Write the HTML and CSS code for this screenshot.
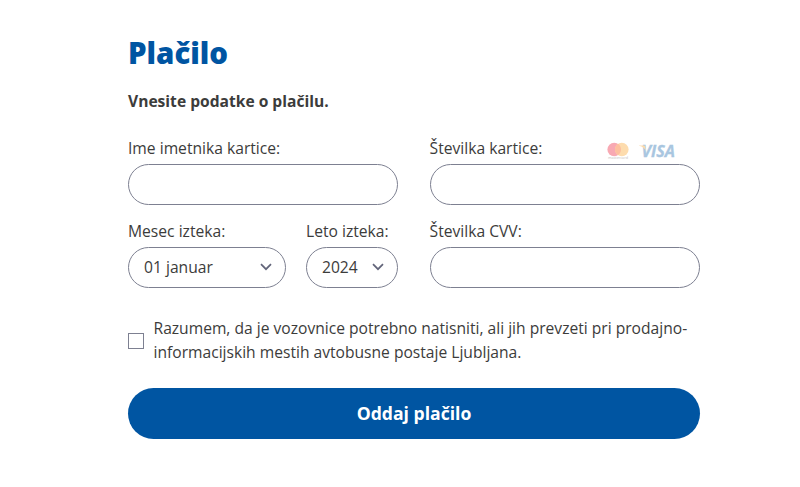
FILE: index.html
```html
<!DOCTYPE html>
<html lang="sl">
<head>
<meta charset="utf-8">
<title>Plačilo</title>
<link rel="stylesheet" href="styles.css">
</head>
<body>
<form class="payment">
  <h1 class="title">Plačilo</h1>
  <p class="intro">Vnesite podatke o plačilu.</p>
  <div class="fields">
    <div class="field">
      <label class="label" for="name">Ime imetnika kartice:</label>
      <input class="control" id="name" type="text">
    </div>
    <div class="field">
      <div class="label-row">
        <label class="label" for="number">Številka kartice:</label>
        <div class="brands">
          <svg class="mastercard" viewBox="0 0 22 18" aria-label="mastercard">
            <circle cx="7.2" cy="7.5" r="6.8" fill="#f8a9b3"/>
            <circle cx="14.8" cy="7.5" r="6.8" fill="#fddcae"/>
            <path d="M11 1.86a6.8 6.8 0 0 1 0 11.28a6.8 6.8 0 0 1 0-11.28z" fill="#fdbf9f"/>
            <text x="1" y="17" textLength="20" lengthAdjust="spacingAndGlyphs" class="mc-name">mastercard</text>
          </svg>
          <svg class="visa" viewBox="0 0 38 20" aria-label="Visa">
            <text x="2.500" y="15" textLength="33.500" lengthAdjust="spacingAndGlyphs" class="visa-name">VISA</text>
            <path d="M0 3.500h4.600c1 0 1.400.4 1.600 1.300l.9 4.400c-1-2.600-3.600-4.600-7.100-5.400z" fill="#fbdcae"/>
          </svg>
        </div>
      </div>
      <input class="control" id="number" type="text">
    </div>
    <div class="expiry">
      <div class="field">
        <span class="label">Mesec izteka:</span>
        <div class="control select"><span class="value">01 januar</span><svg class="chevron" viewBox="0 0 12 8"><path d="M1 1.2l5 5 5-5"/></svg></div>
      </div>
      <div class="field">
        <span class="label">Leto izteka:</span>
        <div class="control select"><span class="value">2024</span><svg class="chevron" viewBox="0 0 12 8"><path d="M1 1.2l5 5 5-5"/></svg></div>
      </div>
    </div>
    <div class="field">
      <label class="label" for="cvv">Številka CVV:</label>
      <input class="control" id="cvv" type="text">
    </div>
  </div>
  <label class="consent">
    <input class="checkbox" type="checkbox">
    <span class="consent-text">Razumem, da je vozovnice potrebno natisniti, ali jih prevzeti pri prodajno-<br>informacijskih mestih avtobusne postaje Ljubljana.</span>
  </label>
  <button class="submit" type="button">Oddaj plačilo</button>
</form>
</body>
</html>
```
FILE: styles.css
```css
* { box-sizing: border-box; }
body {
  margin: 0;
  background: #fff;
  color: #3c3c3b;
  font: 15.65px/24px "Open Sans", sans-serif;
}
.payment { width: 572px; margin-left: 128px; padding-top: 32px; }
.title {
  margin: 0;
  color: #0055a2;
  font-size: 29.4px;
  line-height: 43px;
  font-weight: 800;
}
.intro { margin: 14px 0 0; font-size: 15.6px; font-weight: 700; line-height: 24px; }
.fields {
  display: grid;
  grid-template-columns: 270.4px 270.4px;
  column-gap: 31.2px;
  row-gap: 14px;
  margin-top: 23px;
}
.field { display: flex; flex-direction: column; }
.label { display: block; height: 28px; line-height: 25px; white-space: nowrap; }
.label-row { display: flex; justify-content: space-between; padding-right: 22.500px; }
.brands { display: flex; align-items: flex-start; gap: 10.500px; padding-top: 6px; }
.mastercard { width: 22px; height: 18px; }
.mc-name { font: 3.6px "Open Sans", sans-serif; fill: #c3bebe; }
.visa { width: 38px; height: 20px; overflow: visible; }
.visa-name { font: italic 700 16px "Open Sans", sans-serif; fill: #a9c6e0; stroke: #a9c6e0; stroke-width: 0.3; }
.control {
  width: 100%;
  height: 41px;
  border: 1px solid #7d8091;
  border-radius: 21px;
  background: #fff;
  padding: 0 15px;
  color: inherit;
  font: inherit;
}
.expiry { display: grid; grid-template-columns: 158.4px 92.4px; gap: 19.6px; }
.select { display: flex; align-items: center; justify-content: space-between; padding-right: 13px; }
.value { padding-bottom: 1px; }
.chevron { width: 12px; height: 8px; margin-bottom: 1px; fill: none; stroke: #62657a; stroke-width: 1.7; }
.consent { display: flex; align-items: center; gap: 9.5px; margin-top: 29px; white-space: nowrap; font-size: 15.62px; }
.consent-text { margin: -1px 0 1px; }
.checkbox {
  appearance: none;
  flex: none;
  width: 16px;
  height: 16px;
  margin: 0;
  border: 1px solid #7d8091;
  background: #fff;
}
.submit {
  display: block;
  width: 100%;
  height: 51px;
  margin-top: 23px;
  padding: 0 0 2px;
  border: 0;
  border-radius: 26px;
  background: #0055a2;
  color: #fff;
  font: 700 17.6px/24px "Open Sans", sans-serif;
}
```
